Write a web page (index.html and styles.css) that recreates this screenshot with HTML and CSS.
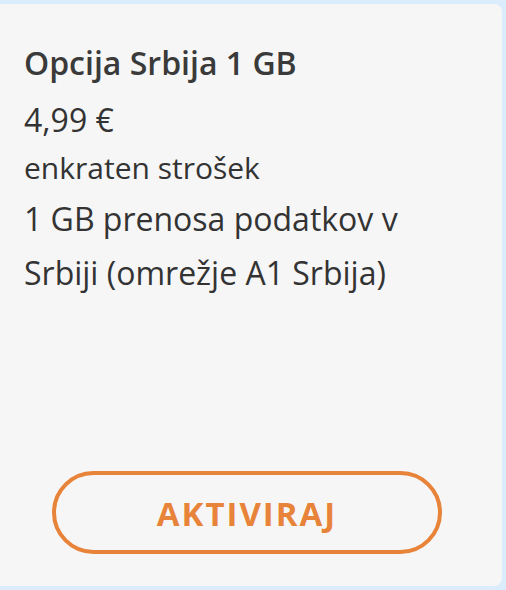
FILE: index.html
```html
<!DOCTYPE html>
<html>
<head>
	<meta charset="UTF-8">
	<meta name="viewport" content="width=device-width,user-scalable=no">
	<title>Opcija Srbija 1 GB</title>
<link rel="stylesheet" href="styles.css">
</head>
<body>
	<section class="card">
		<h2 class="title">Opcija Srbija 1 GB</h2>
		<p class="price">4,99 €</p>
		<p class="note">enkraten strošek</p>
		<p class="desc">1 GB prenosa podatkov v Srbiji (omrežje A1 Srbija)</p>
		<a href="javascript:;" class="btn">AKTIVIRAJ</a>
	</section>
</body>
</html>
```

FILE: styles.css
```css
html,body{
	margin: 0;
	overflow: hidden;
}
body{
	background: #dbedfc;
	font-family: "Open Sans", "Noto Sans", sans-serif;
	color: #333;
	padding-top: 4px;
}
.card{
	box-sizing: border-box;
	width: 510px;
	height: 582px;
	margin-left: -8px;
	padding: 39px 0 32px 32px;
	background: #f6f6f6;
	border-radius: 8px;
	display: flex;
	flex-direction: column;
}
.title{
	margin: 0;
	font-size: 32px;
	font-weight: 600;
	line-height: 40px;
	color: #3a3a3a;
}
.price{
	margin: 17px 0 0;
	font-size: 32px;
	line-height: 40px;
}
.note{
	margin: 8px 0 0;
	font-size: 30px;
	line-height: 40px;
}
.desc{
	margin: 4px 0 0;
	width: 420px;
	font-size: 32px;
	line-height: 54px;
}
.btn{
	box-sizing: border-box;
	margin: auto 0 0 28px;
	width: 390px;
	height: 83px;
	padding-top: 2px;
	border: 4px solid #e8833a;
	border-radius: 42px;
	color: #e8833a;
	font-size: 33px;
	font-weight: 700;
	letter-spacing: 2px;
	text-decoration: none;
	display: flex;
	align-items: center;
	justify-content: center;
}
```
